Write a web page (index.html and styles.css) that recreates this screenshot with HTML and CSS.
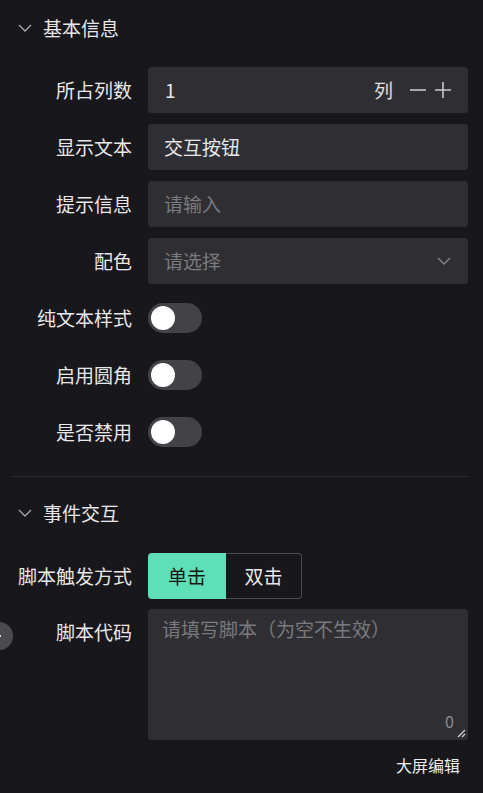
FILE: index.html
```html
<!DOCTYPE html>
<html lang="zh">
<head>
<meta charset="utf-8">
<link rel="stylesheet" href="styles.css">
</head>
<body>
<div class="panel">
  <div class="section-header">
    <svg class="chev" width="14" height="8" viewBox="0 0 14 8"><path d="M1 1 L7 7 L13 1" fill="none" stroke="#a9a9ad" stroke-width="1.3"/></svg>
    <span>基本信息</span>
  </div>
  <div class="form">
    <div class="row">
      <div class="label">所占列数</div>
      <div class="control field number">
        <span class="value">1</span>
        <span class="unit">列</span>
        <svg class="op" width="18" height="18" viewBox="0 0 18 18"><path d="M1 9 H17" stroke="#c9c9cc" stroke-width="1.6"/></svg>
        <svg class="op" width="18" height="18" viewBox="0 0 18 18"><path d="M1 9 H17 M9 1 V17" stroke="#c9c9cc" stroke-width="1.6"/></svg>
      </div>
    </div>
    <div class="row">
      <div class="label">显示文本</div>
      <div class="control field"><span class="value">交互按钮</span></div>
    </div>
    <div class="row">
      <div class="label">提示信息</div>
      <div class="control field"><span class="placeholder">请输入</span></div>
    </div>
    <div class="row">
      <div class="label">配色</div>
      <div class="control field select">
        <span class="placeholder">请选择</span>
        <svg width="14" height="8" viewBox="0 0 14 8"><path d="M1 1 L7 7 L13 1" fill="none" stroke="#8a8a8e" stroke-width="1.3"/></svg>
      </div>
    </div>
    <div class="row">
      <div class="label">纯文本样式</div>
      <div class="switch"><span class="knob"></span></div>
    </div>
    <div class="row">
      <div class="label">启用圆角</div>
      <div class="switch"><span class="knob"></span></div>
    </div>
    <div class="row">
      <div class="label">是否禁用</div>
      <div class="switch"><span class="knob"></span></div>
    </div>
  </div>
  <div class="divider"></div>
  <div class="section-header second">
    <svg class="chev" width="14" height="8" viewBox="0 0 14 8"><path d="M1 1 L7 7 L13 1" fill="none" stroke="#a9a9ad" stroke-width="1.3"/></svg>
    <span>事件交互</span>
  </div>
  <div class="form form2">
    <div class="row">
      <div class="label">脚本触发方式</div>
      <div class="radio-group">
        <span class="seg active">单击</span>
        <span class="seg">双击</span>
      </div>
    </div>
    <div class="row row-top">
      <div class="label">脚本代码</div>
      <div class="control textarea">
        <span class="placeholder">请填写脚本（为空不生效）</span>
        <span class="count">0</span>
        <svg class="resize" width="9" height="9" viewBox="0 0 9 9"><path d="M1 8 L8 1 M5 8 L8 5" stroke="#d0d0d0" stroke-width="1.3"/></svg>
      </div>
    </div>
    <div class="actions"><span class="link">大屏编辑</span></div>
  </div>
  <div class="side-dot"><span></span></div>
</div>
</body>
</html>
```
FILE: styles.css
```css
* { box-sizing: border-box; }
html, body {
  margin: 0;
  padding: 0;
  background: #18171c;
}
body {
  font-family: "Noto Sans CJK SC", "Noto Sans", sans-serif;
  color: #e8e8ea;
  font-size: 19px;
  width: 483px;
  height: 793px;
  overflow: hidden;
}
.panel {
  position: relative;
  padding-top: 8px;
  height: 793px;
}
.section-header {
  height: 40px;
  display: flex;
  align-items: center;
  padding-left: 18px;
  gap: 11px;
  font-size: 19px;
  line-height: 24px;
  color: #e8e8ea;
}
.section-header.second { margin-top: 16px; }
.chev { display: block; }
.form {
  margin-top: 19px;
  padding-right: 15px;
}
.form2 { margin-top: 20px; }
.row {
  display: flex;
  align-items: center;
  gap: 16px;
  height: 46px;
  margin-bottom: 11px;
}
.form2 .row { margin-bottom: 10px; }
.label {
  width: 132px;
  flex: none;
  text-align: right;
  line-height: 46px;
  white-space: nowrap;
}
.control {
  flex: 1;
  min-width: 0;
}
.field {
  height: 46px;
  background: #2f2f33;
  border-radius: 4px;
  display: flex;
  align-items: center;
  padding: 0 16px;
  line-height: 24px;
}
.value { color: #e6e6e8; }
.placeholder { color: #7a7a7e; }
.number .value { flex: 1; padding-left: 1px; }
.number .unit { color: #e0e0e2; margin-right: 16px; }
.number .op { margin-left: 7px; display: block; }
.number .op:first-of-type { margin-left: 0; }
.select { justify-content: space-between; padding-right: 17px; }
.select svg { display: block; }
.switch {
  width: 54px;
  height: 30px;
  border-radius: 15px;
  background: #434347;
  padding: 3px;
}
.knob {
  display: block;
  width: 24px;
  height: 24px;
  border-radius: 50%;
  background: #ffffff;
}
.divider {
  height: 1px;
  background: #2b2a30;
  margin: 21px 15px 0 12px;
}
.radio-group {
  display: flex;
  height: 46px;
}
.seg {
  display: flex;
  align-items: center;
  justify-content: center;
  height: 46px;
  line-height: 24px;
}
.seg.active {
  width: 78px;
  background: #5edfb5;
  color: #17171a;
  border-radius: 4px 0 0 4px;
}
.seg:not(.active) {
  width: 76px;
  border: 1px solid #4b4b50;
  border-left: none;
  border-radius: 0 4px 4px 0;
  color: #e8e8ea;
}
.row-top {
  height: 131px;
  align-items: flex-start;
}
.textarea {
  position: relative;
  height: 131px;
  background: #2f2f33;
  border-radius: 4px;
  padding: 7px 14px;
  line-height: 26px;
}
.count {
  position: absolute;
  right: 14px;
  bottom: 9px;
  font-size: 16px;
  line-height: 20px;
  color: #8c8c90;
}
.resize {
  position: absolute;
  right: 2px;
  bottom: 2px;
}
.actions {
  display: flex;
  justify-content: flex-end;
  padding-right: 8px;
  margin-top: 7px;
}
.link {
  font-size: 16px;
  line-height: 30px;
  color: #ececee;
}
.side-dot {
  position: absolute;
  left: -15px;
  top: 622px;
  width: 28px;
  height: 28px;
  border-radius: 50%;
  background: #4b4b4f;
}
.side-dot span {
  position: absolute;
  left: 14px;
  top: 13px;
  width: 2px;
  height: 2px;
  background: #e0e0e0;
}
```
